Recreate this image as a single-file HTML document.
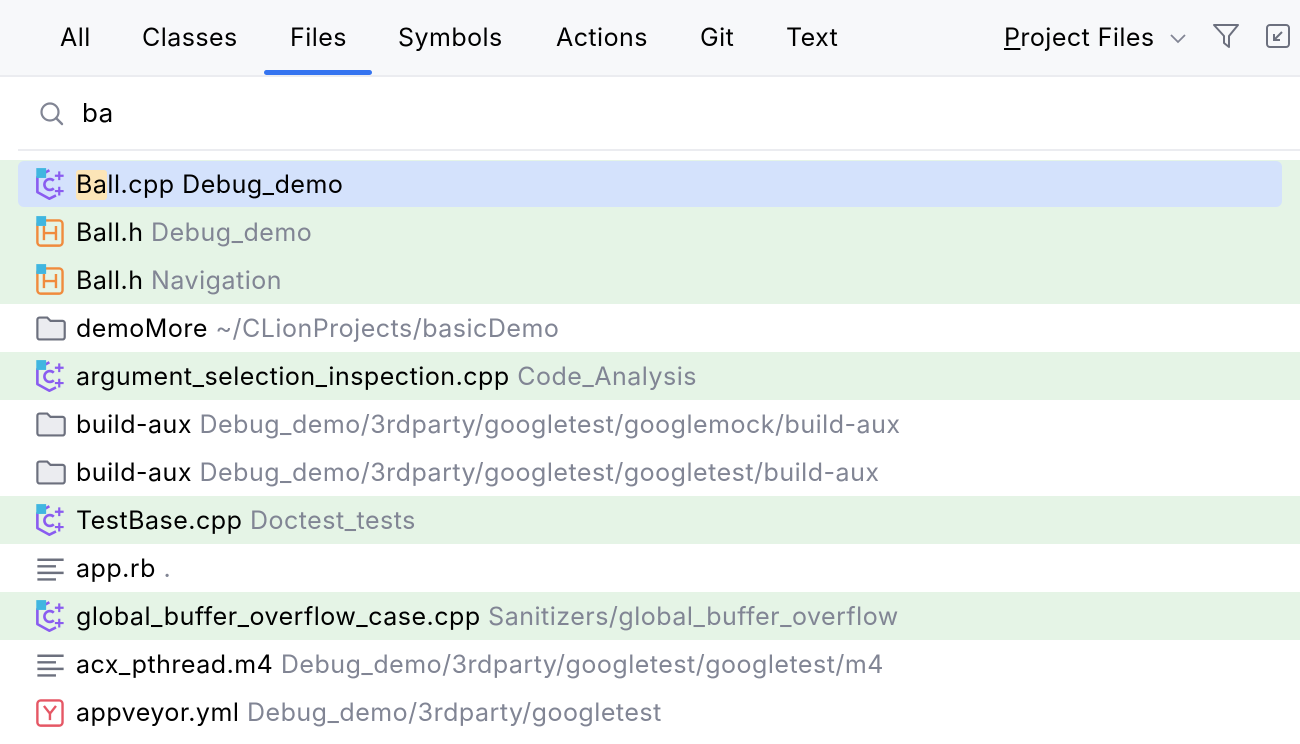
<!DOCTYPE html>
<html><head><meta charset="utf-8"><style>
*{margin:0;padding:0;box-sizing:border-box}
body{width:1300px;height:744px;overflow:hidden;background:#fff;font-family:"Inter","Liberation Sans",sans-serif;color:#000;position:relative}
.hdr{position:absolute;left:0;top:0;width:1300px;height:77px;background:#f7f8fa;border-bottom:2px solid #ebecf0}
.tab{position:absolute;top:21px;font-size:25px;letter-spacing:0.45px;line-height:34px;color:#000}
.ul{position:absolute;left:264px;top:70px;width:108px;height:5px;border-radius:3px;background:#3574f0}
.search{position:absolute;left:18px;top:149px;width:1282px;height:2px;background:#ebecf0}
.row{position:absolute;left:0;width:1300px;height:48px;font-size:25px;letter-spacing:0.5px;line-height:50px;white-space:nowrap}
.row .t{position:absolute;left:76px;top:0}
.g{color:#818594}
.green{background:#e5f4e6}
.sel{position:absolute;left:18px;top:161px;width:1264px;height:46px;background:#d4e2fc;border-radius:6px}
.ic{position:absolute;left:33px;top:7px;width:35px;height:35px}
</style></head><body>
<div class="hdr">
<div class="tab" style="left:60px">All</div>
<div class="tab" style="left:142px">Classes</div>
<div class="tab" style="left:290px">Files</div>
<div class="tab" style="left:398px">Symbols</div>
<div class="tab" style="left:556px">Actions</div>
<div class="tab" style="left:700px">Git</div>
<div class="tab" style="left:786px">Text</div>
<div class="tab" style="left:1004px"><u>P</u>roject Files</div>
<svg style="position:absolute;left:1168px;top:30px" width="20" height="16"><path d="M3 5l7 7 7-7" stroke="#818594" stroke-width="1.8" fill="none"/></svg>
<svg style="position:absolute;left:1212px;top:22px" width="28" height="28"><path d="M2 3h24l-9 11v11l-5-4v-7z" stroke="#6c707e" stroke-width="2" fill="none" stroke-linejoin="round"/></svg>
<svg style="position:absolute;left:1264px;top:22px" width="28" height="28"><rect x="3" y="3" width="22" height="22" rx="3" stroke="#6c707e" stroke-width="2" fill="none"/><path d="M18 10l-8 8M10 12v6h6" stroke="#6c707e" stroke-width="2" fill="none"/></svg>
<div class="ul"></div>
</div>
<svg style="position:absolute;left:38px;top:100px" width="28" height="28"><circle cx="12" cy="12" r="8.5" stroke="#818594" stroke-width="2.2" fill="none"/><path d="M18 18l6 6" stroke="#818594" stroke-width="2.4" stroke-linecap="round"/></svg>
<div style="position:absolute;left:82px;top:97px;font-size:26px;letter-spacing:0.45px;line-height:34px">ba</div>
<div class="search"></div>

<div class="row green" style="top:160px;height:144px"></div>
<div class="row green" style="top:352px"></div>
<div class="row green" style="top:496px"></div>
<div class="row green" style="top:592px"></div>
<div class="sel"></div>

<svg width="0" height="0" style="position:absolute"><defs>
<g id="cpp"><path d="M16 4L5 10v14l11 6 6-3" stroke="#8a5cf0" stroke-width="2.4" fill="none" stroke-linejoin="round"/><path d="M20 13.5a5 5 0 1 0 0 7" stroke="#8a5cf0" stroke-width="2.4" fill="none"/><path d="M25 5v8M21 9h8M25 19v8M21 23h8" stroke="#8a5cf0" stroke-width="2"/><rect x="4" y="2" width="9" height="9" fill="#40b6e0"/></g>
<g id="h"><rect x="5" y="6" width="23" height="23" rx="3" stroke="#f08b3d" stroke-width="2.2" fill="none"/><path d="M11 11v13M22 11v13M11 17.5h11" stroke="#f08b3d" stroke-width="2.2"/><rect x="4" y="2" width="9" height="9" fill="#40b6e0"/></g>
<g id="fold"><path d="M5 9a2 2 0 0 1 2-2h7l3 3h11a2 2 0 0 1 2 2v13a2 2 0 0 1-2 2H7a2 2 0 0 1-2-2z" stroke="#6c707e" stroke-width="2" fill="#ebecf0"/></g>
<g id="txt"><path d="M5 9h24M5 15h17M5 21h24M5 27h17" stroke="#6c707e" stroke-width="2.2"/></g>
</defs></svg>

<div class="row" style="top:160px"><svg class="ic" viewBox="1 1 32 32"><use href="#cpp"/></svg><span class="t"><span style="background:#fce5b7;border-radius:3px">Ba</span>ll.cpp Debug_demo</span></div>
<div class="row" style="top:208px"><svg class="ic" viewBox="1 1 32 32"><use href="#h"/></svg><span class="t">Ball.h <span class="g">Debug_demo</span></span></div>
<div class="row" style="top:256px"><svg class="ic" viewBox="1 1 32 32"><use href="#h"/></svg><span class="t">Ball.h <span class="g">Navigation</span></span></div>
<div class="row" style="top:304px"><svg class="ic" viewBox="1 1 32 32"><use href="#fold"/></svg><span class="t">demoMore <span class="g">~/CLionProjects/basicDemo</span></span></div>
<div class="row" style="top:352px"><svg class="ic" viewBox="1 1 32 32"><use href="#cpp"/></svg><span class="t">argument_selection_inspection.cpp <span class="g">Code_Analysis</span></span></div>
<div class="row" style="top:400px"><svg class="ic" viewBox="1 1 32 32"><use href="#fold"/></svg><span class="t">build-aux <span class="g">Debug_demo/3rdparty/googletest/googlemock/build-aux</span></span></div>
<div class="row" style="top:448px"><svg class="ic" viewBox="1 1 32 32"><use href="#fold"/></svg><span class="t">build-aux <span class="g">Debug_demo/3rdparty/googletest/googletest/build-aux</span></span></div>
<div class="row" style="top:496px"><svg class="ic" viewBox="1 1 32 32"><use href="#cpp"/></svg><span class="t">TestBase.cpp <span class="g">Doctest_tests</span></span></div>
<div class="row" style="top:544px"><svg class="ic" viewBox="1 1 32 32"><use href="#txt"/></svg><span class="t">app.rb <span class="g">.</span></span></div>
<div class="row" style="top:592px"><svg class="ic" viewBox="1 1 32 32"><use href="#cpp"/></svg><span class="t">global_buffer_overflow_case.cpp <span class="g">Sanitizers/global_buffer_overflow</span></span></div>
<div class="row" style="top:640px"><svg class="ic" viewBox="1 1 32 32"><use href="#txt"/></svg><span class="t">acx_pthread.m4 <span class="g">Debug_demo/3rdparty/googletest/googletest/m4</span></span></div>
<div class="row" style="top:688px"><svg class="ic" viewBox="1 1 32 32"><rect x="5" y="6" width="23" height="23" rx="3" stroke="#e55765" stroke-width="2.2" fill="none"/><path d="M11 11l5.5 7 5.5-7M16.5 18v6" stroke="#e55765" stroke-width="2.2" fill="none"/></svg><span class="t">appveyor.yml <span class="g">Debug_demo/3rdparty/googletest</span></span></div>
</body></html>
